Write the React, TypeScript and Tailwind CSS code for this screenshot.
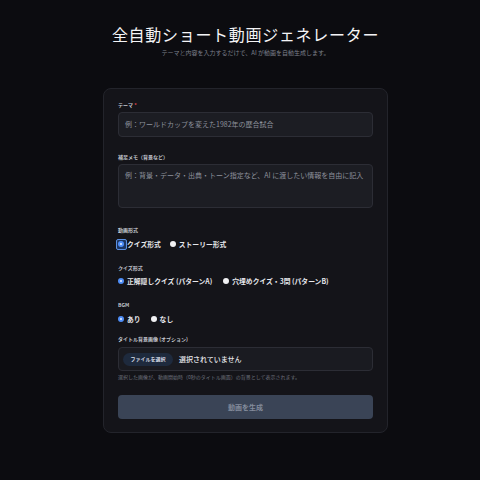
import React, { useState } from 'react';

type Option = { value: string; label: string };

function Radio({ checked, focused }: { checked: boolean; focused?: boolean }) {
  return (
    <span className="relative w-[6px] h-[6px] shrink-0">
      {focused && (
        <span className="absolute -inset-[2.5px] rounded-[2px] border border-[#5b8fe0] bg-[#1d3560]" />
      )}
      {checked ? (
        <span className="relative w-[6px] h-[6px] rounded-full bg-[#4f8ef7] flex items-center justify-center">
          <span className="w-[2.5px] h-[2.5px] rounded-full bg-[#e8efff]" />
        </span>
      ) : (
        <span className="relative block w-[6px] h-[6px] rounded-full bg-[#f1f1f3]" />
      )}
    </span>
  );
}

function RadioGroup({
  options,
  value,
  onChange,
  focused,
  gap,
}: {
  options: Option[];
  value: string;
  onChange: (v: string) => void;
  focused?: boolean;
  gap: string;
}) {
  return (
    <div className={`flex items-center ${gap} h-[10px]`}>
      {options.map((o) => (
        <label key={o.value} className="flex items-center gap-[3px] cursor-pointer" onClick={() => onChange(o.value)}>
          <Radio checked={value === o.value} focused={focused && value === o.value} />
          <span className="text-[6.8px] leading-[10px] font-semibold text-[#e6e7ec]">{o.label}</span>
        </label>
      ))}
    </div>
  );
}

function Label({ children }: { children: React.ReactNode }) {
  return <div className="text-[5px] leading-[8px] font-bold text-[#c3c6ce]">{children}</div>;
}

export default function App() {
  const [format, setFormat] = useState('quiz');
  const [quizType, setQuizType] = useState('a');
  const [bgm, setBgm] = useState('on');

  return (
    <div
      className="min-h-[480px] bg-[#0c0c10] pl-[11px] pt-[24px]"
      style={{ fontFamily: '"Noto Sans CJK JP", "Noto Sans", sans-serif' }}
    >
      <h1 className="text-center text-[16px] leading-[20px] font-normal tracking-[0.7px] text-[#f4f4f6]">
        全自動ショート動画ジェネレーター
      </h1>
      <p className="mt-[5px] text-center text-[6px] leading-[8px] text-[#7c808b]">
        テーマと内容を入力するだけで、AI が動画を自動生成します。
      </p>

      <div className="mx-auto mt-[31px] w-[285px] rounded-[8px] border border-[#23242b] bg-[#141419] px-[14px] pt-[12px] pb-[13px]">
        <Label>
          テーマ <span className="text-[#e5484d]">*</span>
        </Label>
        <div className="mt-[3px] h-[25px] rounded-[4px] border border-[#2c2d35] bg-[#1c1d23] px-[6px] flex items-center">
          <span className="text-[7px] text-[#8d919c]">例：ワールドカップを変えた1982年の歴合試合</span>
        </div>

        <div className="mt-[16px]">
          <Label>補足メモ（背景など）</Label>
        </div>
        <div className="mt-[3px] h-[44px] rounded-[4px] border border-[#2c2d35] bg-[#1c1d23] px-[6px] pt-[4px] text-[7px] leading-[12px] text-[#8d919c]">
          例：背景・データ・出典・トーン指定など、AI に渡したい情報を自由に記入
        </div>

        <div className="mt-[18px]">
          <Label>動画形式</Label>
        </div>
        <div className="mt-[5px]">
          <RadioGroup
            gap="gap-[9px]"
            focused
            value={format}
            onChange={setFormat}
            options={[
              { value: 'quiz', label: 'クイズ形式' },
              { value: 'story', label: 'ストーリー形式' },
            ]}
          />
        </div>

        <div className="mt-[15px]">
          <Label>クイズ形式</Label>
        </div>
        <div className="mt-[4px]">
          <RadioGroup
            gap="gap-[11px]"
            value={quizType}
            onChange={setQuizType}
            options={[
              { value: 'a', label: '正解隠しクイズ (パターンA)' },
              { value: 'b', label: '穴埋めクイズ・3問 (パターンB)' },
            ]}
          />
        </div>

        <div className="mt-[15px]">
          <Label>BGM</Label>
        </div>
        <div className="mt-[5px]">
          <RadioGroup
            gap="gap-[10px]"
            value={bgm}
            onChange={setBgm}
            options={[
              { value: 'on', label: 'あり' },
              { value: 'off', label: 'なし' },
            ]}
          />
        </div>

        <div className="mt-[11px]">
          <Label>タイトル背景画像 (オプション)</Label>
        </div>
        <div className="mt-[4px] h-[24px] rounded-[4px] border border-[#2c2d35] bg-[#1a1b21] pl-[4px] flex items-center gap-[6px]">
          <span className="h-[13px] w-[50px] rounded-full bg-[#1e2a3d] flex items-center justify-center text-[5px] font-bold text-[#d7dce6]">
            ファイルを選択
          </span>
          <span className="text-[7px] font-medium text-[#e8e9ee]">選択されていません</span>
        </div>
        <p className="mt-[2px] text-[5px] leading-[7px] text-[#6d717c]">
          選択した画像が、動画開始時（0秒のタイトル画面）の背景として表示されます。
        </p>

        <button
          disabled
          className="mt-[15px] w-full h-[24px] rounded-[4px] bg-[#3a4456] text-[7px] font-bold text-[#848c9c]"
        >
          動画を生成
        </button>
      </div>
    </div>
  );
}
